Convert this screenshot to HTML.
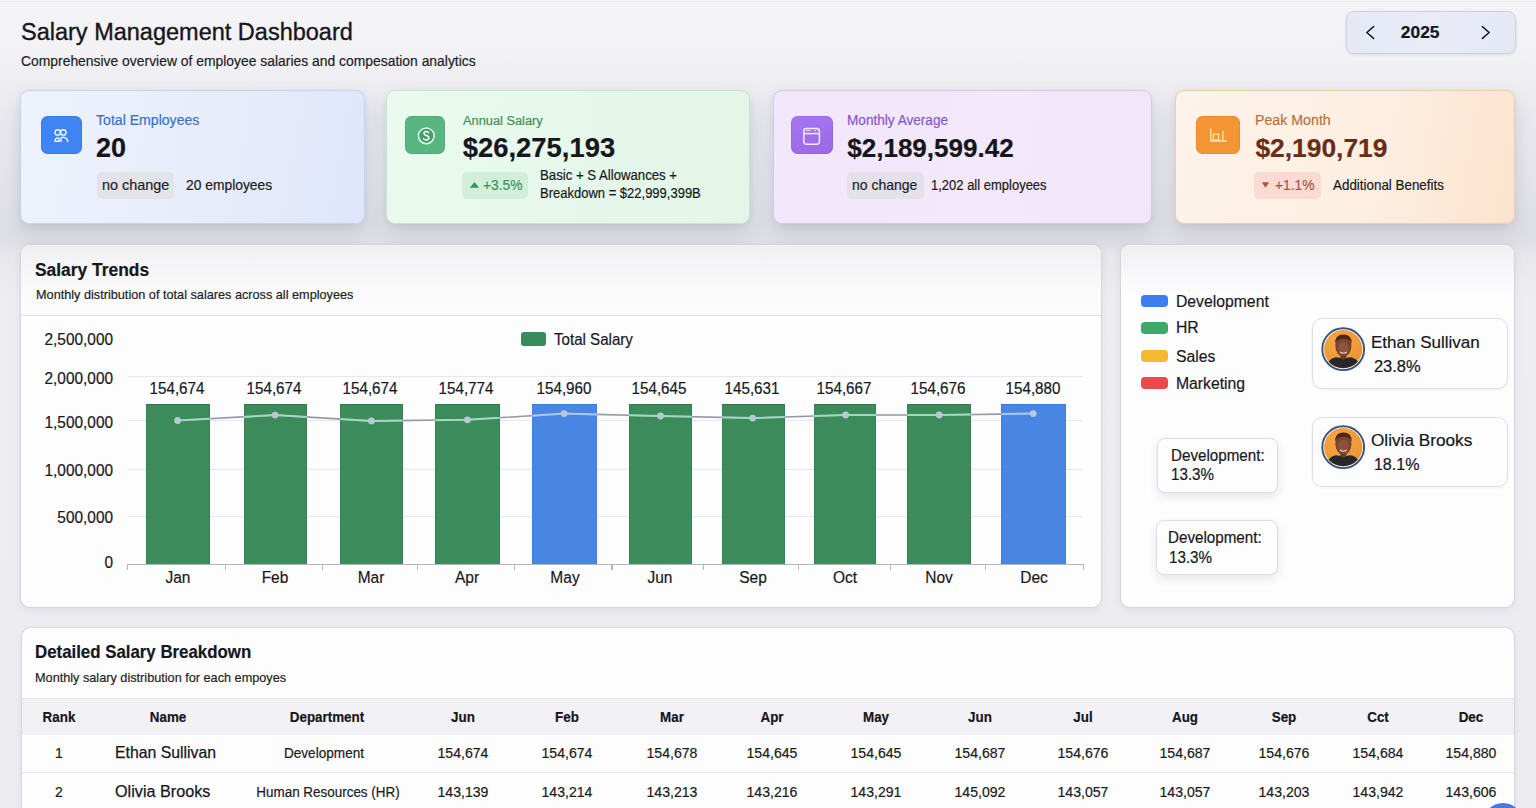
<!DOCTYPE html>
<html><head><meta charset="utf-8"><title>Salary Management Dashboard</title>
<style>
html,body{margin:0;padding:0;}
body{width:1536px;height:808px;overflow:hidden;position:relative;background:linear-gradient(180deg,#f4f4f7 0px,#f2f2f5 60px,#eeeef2 300px,#ededf1 808px);font-family:"Liberation Sans",sans-serif;}
.t{position:absolute;white-space:nowrap;-webkit-text-stroke:0.2px currentColor;}
.r{position:absolute;}
</style></head><body>
<div class="r" style="left:0.00px;top:0.60px;width:1536.00px;height:1.20px;background:#eaeaee;"></div>
<div class="r" style="left:0.00px;top:56.00px;width:1536.00px;height:244.00px;background:linear-gradient(180deg,rgba(235,235,240,0) 0%,rgba(232,232,238,.75) 22%,#e4e4ea 55%,#e0e0e7 70%,#e0e0e7 77%,#e7e7ec 82%,rgba(236,236,241,0) 100%);"></div>
<div class="t" style="top:17px;font-size:23.50px;line-height:30px;font-weight:400;color:#16161c;left:21.00px;transform-origin:0 0;-webkit-text-stroke:0.35px #16161c;">Salary Management Dashboard</div>
<div class="t" style="top:51px;font-size:14.87px;line-height:20px;font-weight:400;color:#1d1d24;left:21.00px;transform-origin:0 0;transform:scaleX(0.9346);">Comprehensive overview of employee salaries and compesation analytics</div>
<div class="r" style="left:1346.00px;top:10.50px;width:169.50px;height:43.00px;background:linear-gradient(90deg,#e5e9f6,#e9ecf7 50%,#e4e8f5);border:1px solid #cdd2e2;border-radius:8px;box-shadow:0 1px 3px rgba(60,60,90,.12);box-sizing:border-box;"></div>
<div class="t" style="top:20px;font-size:17.40px;line-height:24px;font-weight:700;color:#15151c;left:1120.20px;width:600px;text-align:center;transform-origin:50% 0;">2025</div>
<svg class="r" style="left:1362px;top:24px" width="16" height="18" viewBox="0 0 16 18"><path d="M11.6 2.6 L4.8 8.5 L11.6 14.4" fill="none" stroke="#1a1a22" stroke-width="1.5" stroke-linecap="round" stroke-linejoin="round"/></svg>
<svg class="r" style="left:1478px;top:24px" width="16" height="18" viewBox="0 0 16 18"><path d="M4.4 2.6 L11.2 8.5 L4.4 14.4" fill="none" stroke="#1a1a22" stroke-width="1.5" stroke-linecap="round" stroke-linejoin="round"/></svg>
<div class="r" style="left:20.00px;top:90.00px;width:345.00px;height:134.00px;background:linear-gradient(100deg,#eef2fc 0%,#e7ecfb 60%,#dfe6fb 100%);border:1px solid #c5d2f3;border-radius:9px;box-sizing:border-box;box-shadow:0 10px 22px rgba(50,50,95,.13), 0 2px 6px rgba(50,50,95,.06);"></div>
<div class="r" style="left:40.60px;top:115.80px;width:41.00px;height:38.50px;background:#3f84f3;border-radius:6.5px;box-shadow:inset 0 0 0 1px rgba(0,0,0,.06);"></div>
<div class="t" style="top:109px;font-size:15.09px;line-height:21px;font-weight:400;color:#3673cc;left:96.00px;transform-origin:0 0;transform:scaleX(0.9346);">Total Employees</div>
<div class="t" style="top:131px;font-size:27.00px;line-height:34px;font-weight:700;color:#14141a;left:96.00px;transform-origin:0 0;">20</div>
<div class="r" style="left:97.00px;top:172.00px;width:77.00px;height:26.50px;background:#e3e3ea;border-radius:5px;"></div>
<div class="t" style="top:174px;font-size:15.41px;line-height:21px;font-weight:400;color:#1f1f26;left:102.20px;transform-origin:0 0;transform:scaleX(0.9346);">no change</div>
<div class="t" style="top:175px;font-size:14.82px;line-height:20px;font-weight:400;color:#1a1a20;left:186.10px;transform-origin:0 0;transform:scaleX(0.9346);">20 employees</div>
<div class="r" style="left:386.00px;top:90.00px;width:364.00px;height:134.00px;background:linear-gradient(100deg,#eafaef 0%,#e5f7ea 60%,#e3f6e8 100%);border:1px solid #c4e6cd;border-radius:9px;box-sizing:border-box;box-shadow:0 10px 22px rgba(50,50,95,.13), 0 2px 6px rgba(50,50,95,.06);"></div>
<div class="r" style="left:405.00px;top:115.80px;width:40.20px;height:38.50px;background:#58b681;border-radius:6.5px;box-shadow:inset 0 0 0 1px rgba(0,0,0,.06);"></div>
<div class="t" style="top:111px;font-size:13.70px;line-height:19px;font-weight:400;color:#3f8f54;left:462.80px;transform-origin:0 0;transform:scaleX(0.9346);">Annual Salary</div>
<div class="t" style="top:130px;font-size:27.40px;line-height:35px;font-weight:700;color:#16161c;left:462.80px;transform-origin:0 0;">$26,275,193</div>
<div class="r" style="left:462.30px;top:172.00px;width:65.70px;height:26.50px;background:#d3efdb;border-radius:5px;"></div>
<svg class="r" style="left:468.5px;top:181px" width="11" height="8"><path d="M5.5 1 L10.2 6.8 L0.8 6.8Z" fill="#3a9655"/></svg>
<div class="t" style="top:175px;font-size:14.77px;line-height:20px;font-weight:400;color:#3a9655;left:483.30px;transform-origin:0 0;transform:scaleX(0.9346);">+3.5%</div>
<div class="t" style="top:165px;font-size:14.12px;line-height:20px;font-weight:400;color:#1a1a20;left:539.70px;transform-origin:0 0;transform:scaleX(0.9346);">Basic + S Allowances +</div>
<div class="t" style="top:183px;font-size:13.91px;line-height:20px;font-weight:400;color:#1a1a20;left:539.70px;transform-origin:0 0;transform:scaleX(0.9346);">Breakdown = $22,999,399B</div>
<div class="r" style="left:773.00px;top:90.00px;width:379.00px;height:134.00px;background:linear-gradient(100deg,#f2e7fb 0%,#f3e9fb 60%,#f1e6fa 100%);border:1px solid #d9c6ef;border-radius:9px;box-sizing:border-box;box-shadow:0 10px 22px rgba(50,50,95,.13), 0 2px 6px rgba(50,50,95,.06);"></div>
<div class="r" style="left:791.10px;top:115.80px;width:41.90px;height:38.50px;background:linear-gradient(160deg,#a676f2,#9b68e4);border-radius:6.5px;box-shadow:inset 0 0 0 1px rgba(0,0,0,.06);"></div>
<div class="t" style="top:110px;font-size:14.55px;line-height:20px;font-weight:400;color:#8657c9;left:847.20px;transform-origin:0 0;transform:scaleX(0.9346);">Monthly Average</div>
<div class="t" style="top:131px;font-size:26.05px;line-height:34px;font-weight:700;color:#16141c;left:847.20px;transform-origin:0 0;">$2,189,599.42</div>
<div class="r" style="left:847.00px;top:172.00px;width:76.50px;height:26.50px;background:#e4e1ea;border-radius:5px;"></div>
<div class="t" style="top:174px;font-size:14.98px;line-height:21px;font-weight:400;color:#1f1f26;left:852.20px;transform-origin:0 0;transform:scaleX(0.9346);">no change</div>
<div class="t" style="top:175px;font-size:13.91px;line-height:20px;font-weight:400;color:#1a1a20;left:930.50px;transform-origin:0 0;transform:scaleX(0.9346);">1,202 all employees</div>
<div class="r" style="left:1175.00px;top:90.00px;width:340.00px;height:134.00px;background:linear-gradient(100deg,#fdf3ea 0%,#fdeee0 60%,#fde3cd 100%);border:1px solid #f3cdab;border-radius:9px;box-sizing:border-box;box-shadow:0 10px 22px rgba(50,50,95,.13), 0 2px 6px rgba(50,50,95,.06);"></div>
<div class="r" style="left:1196.00px;top:115.80px;width:44.00px;height:38.50px;background:#f39532;border-radius:6.5px;box-shadow:inset 0 0 0 1px rgba(0,0,0,.06);"></div>
<div class="t" style="top:109px;font-size:15.19px;line-height:21px;font-weight:400;color:#b9703c;left:1255.40px;transform-origin:0 0;transform:scaleX(0.9346);">Peak Month</div>
<div class="t" style="top:131px;font-size:26.40px;line-height:34px;font-weight:700;color:#6a2d14;left:1255.40px;transform-origin:0 0;">$2,190,719</div>
<div class="r" style="left:1254.00px;top:172.00px;width:67.00px;height:26.50px;background:#f9dbd3;border-radius:5px;"></div>
<svg class="r" style="left:1261.2px;top:181px" width="9" height="8"><path d="M0.8 1.2 L8.2 1.2 L4.5 6.8Z" fill="#a95848"/></svg>
<div class="t" style="top:175px;font-size:14.77px;line-height:20px;font-weight:400;color:#a95848;left:1275.00px;transform-origin:0 0;transform:scaleX(0.9346);">+1.1%</div>
<div class="t" style="top:175px;font-size:14.34px;line-height:20px;font-weight:400;color:#1a1a20;left:1332.50px;transform-origin:0 0;transform:scaleX(0.9346);">Additional Benefits</div>
<svg class="r" style="left:40px;top:115.5px" width="42" height="40" viewBox="0 0 42 40">
<g fill="none" stroke="#f2f7ff" stroke-width="1.35" stroke-linecap="round">
<circle cx="17.7" cy="16.4" r="2.7"/><circle cx="23.3" cy="16.4" r="2.7"/>
<path d="M15 25.2 Q15.2 21.9 18 21.6 Q19.2 21.7 19.2 23.4 V25.2 Z"/>
<path d="M21 25.4 V22.4 Q21.6 21.2 24 21.3 Q27.4 21.9 27.8 25.6"/>
</g></svg>
<svg class="r" style="left:404.5px;top:115.5px" width="42" height="40" viewBox="0 0 42 40">
<circle cx="21.3" cy="19.8" r="7.9" fill="#4a9d6b" stroke="#dcf8e8" stroke-width="1.5"/>
<path d="M23.6 16.6 Q22.9 15.6 21.2 15.6 Q19 15.6 19 17.4 Q19 19 21.3 19.5 Q23.8 20.1 23.8 22 Q23.8 24 21.2 24 Q19.4 24 18.6 22.9" fill="none" stroke="#f2fff7" stroke-width="1.5" stroke-linecap="round"/>
</svg>
<svg class="r" style="left:791px;top:115.5px" width="42" height="40" viewBox="0 0 42 40">
<g fill="none" stroke="#f6e6ff" stroke-width="1.5"><rect x="12.8" y="12.4" width="15.6" height="15.8" rx="2.6"/><path d="M12.8 17.6 H28.4"/></g>
<path d="M14.8 14.6 H19.5 M23.5 14.6 H25.5" stroke="#f6e6ff" stroke-width="0.9"/>
</svg>
<svg class="r" style="left:1196px;top:115.5px" width="44" height="40" viewBox="0 0 44 40">
<g fill="none" stroke="#fde7b6" stroke-width="1.3"><path d="M14.8 12.6 V25 H30.7"/><rect x="17.4" y="18.2" width="5.2" height="5.6"/><path d="M26.8 14.8 V24.4"/></g>
</svg>
<div class="r" style="left:20.40px;top:244.00px;width:1081.60px;height:363.50px;background:#fdfdfe;border:1px solid #d4d4db;border-radius:10px;box-sizing:border-box;box-shadow:0 3px 10px rgba(70,70,110,.09);"></div>
<div class="r" style="left:21.40px;top:245.00px;width:1079.60px;height:70.00px;background:linear-gradient(180deg,#f0f0f3,#f9f9fa 55%,#fdfdfe);border-radius:9px 9px 0 0;"></div>
<div class="r" style="left:21.40px;top:314.50px;width:1079.60px;height:1.50px;background:#e3e4ea;"></div>
<div class="t" style="top:257px;font-size:18.62px;line-height:25px;font-weight:700;color:#16161c;left:35.40px;transform-origin:0 0;transform:scaleX(0.9346);">Salary Trends</div>
<div class="t" style="top:285px;font-size:13.59px;line-height:19px;font-weight:400;color:#1e1e25;left:35.60px;transform-origin:0 0;transform:scaleX(0.9346);">Monthly distribution of total salares across all employees</div>
<div class="t" style="top:328px;font-size:16.48px;line-height:22px;font-weight:400;color:#18181e;left:-487.20px;width:600px;text-align:right;transform-origin:100% 0;transform:scaleX(0.9346);">2,500,000</div>
<div class="t" style="top:367px;font-size:16.48px;line-height:22px;font-weight:400;color:#18181e;left:-487.20px;width:600px;text-align:right;transform-origin:100% 0;transform:scaleX(0.9346);">2,000,000</div>
<div class="t" style="top:411px;font-size:16.48px;line-height:22px;font-weight:400;color:#18181e;left:-487.20px;width:600px;text-align:right;transform-origin:100% 0;transform:scaleX(0.9346);">1,500,000</div>
<div class="t" style="top:459px;font-size:16.48px;line-height:22px;font-weight:400;color:#18181e;left:-487.20px;width:600px;text-align:right;transform-origin:100% 0;transform:scaleX(0.9346);">1,000,000</div>
<div class="t" style="top:506px;font-size:16.48px;line-height:22px;font-weight:400;color:#18181e;left:-487.20px;width:600px;text-align:right;transform-origin:100% 0;transform:scaleX(0.9346);">500,000</div>
<div class="t" style="top:551px;font-size:16.48px;line-height:22px;font-weight:400;color:#18181e;left:-487.20px;width:600px;text-align:right;transform-origin:100% 0;transform:scaleX(0.9346);">0</div>
<div class="r" style="left:127.60px;top:376.10px;width:955.80px;height:1.20px;background:#e7e8ec;"></div>
<div class="r" style="left:127.60px;top:419.60px;width:955.80px;height:1.20px;background:#e7e8ec;"></div>
<div class="r" style="left:127.60px;top:468.70px;width:955.80px;height:1.20px;background:#e7e8ec;"></div>
<div class="r" style="left:127.60px;top:516.00px;width:955.80px;height:1.20px;background:#e7e8ec;"></div>
<div class="r" style="left:521.00px;top:332.00px;width:25.00px;height:14.00px;background:#3a8b5b;border-radius:3px;"></div>
<div class="t" style="top:328px;font-size:16.16px;line-height:22px;font-weight:400;color:#18181e;left:554.00px;transform-origin:0 0;transform:scaleX(0.9346);">Total Salary</div>
<div class="r" style="left:145.60px;top:403.60px;width:64.60px;height:160.40px;background:#3b8b5b;box-shadow:inset 0 1px 0 #327a4e,inset 1px 0 0 #327a4e88,inset -1px 0 0 #327a4e88;"></div>
<div class="t" style="top:377px;font-size:16.26px;line-height:22px;font-weight:400;color:#18181e;left:-123.10px;width:600px;text-align:center;transform-origin:50% 0;transform:scaleX(0.9346);">154,674</div>
<div class="t" style="top:566px;font-size:16.59px;line-height:23px;font-weight:400;color:#18181e;left:-122.10px;width:600px;text-align:center;transform-origin:50% 0;transform:scaleX(0.9346);">Jan</div>
<div class="r" style="left:243.50px;top:403.60px;width:63.50px;height:160.40px;background:#3b8b5b;box-shadow:inset 0 1px 0 #327a4e,inset 1px 0 0 #327a4e88,inset -1px 0 0 #327a4e88;"></div>
<div class="t" style="top:377px;font-size:16.26px;line-height:22px;font-weight:400;color:#18181e;left:-25.75px;width:600px;text-align:center;transform-origin:50% 0;transform:scaleX(0.9346);">154,674</div>
<div class="t" style="top:566px;font-size:16.59px;line-height:23px;font-weight:400;color:#18181e;left:-24.75px;width:600px;text-align:center;transform-origin:50% 0;transform:scaleX(0.9346);">Feb</div>
<div class="r" style="left:340.20px;top:403.60px;width:62.40px;height:160.40px;background:#3b8b5b;box-shadow:inset 0 1px 0 #327a4e,inset 1px 0 0 #327a4e88,inset -1px 0 0 #327a4e88;"></div>
<div class="t" style="top:377px;font-size:16.26px;line-height:22px;font-weight:400;color:#18181e;left:70.40px;width:600px;text-align:center;transform-origin:50% 0;transform:scaleX(0.9346);">154,674</div>
<div class="t" style="top:566px;font-size:16.59px;line-height:23px;font-weight:400;color:#18181e;left:71.40px;width:600px;text-align:center;transform-origin:50% 0;transform:scaleX(0.9346);">Mar</div>
<div class="r" style="left:435.20px;top:403.60px;width:64.50px;height:160.40px;background:#3b8b5b;box-shadow:inset 0 1px 0 #327a4e,inset 1px 0 0 #327a4e88,inset -1px 0 0 #327a4e88;"></div>
<div class="t" style="top:377px;font-size:16.26px;line-height:22px;font-weight:400;color:#18181e;left:166.45px;width:600px;text-align:center;transform-origin:50% 0;transform:scaleX(0.9346);">154,774</div>
<div class="t" style="top:566px;font-size:16.59px;line-height:23px;font-weight:400;color:#18181e;left:167.45px;width:600px;text-align:center;transform-origin:50% 0;transform:scaleX(0.9346);">Apr</div>
<div class="r" style="left:532.20px;top:403.60px;width:65.20px;height:160.40px;background:#4985e2;box-shadow:inset 0 1px 0 #3d78d8,inset 1px 0 0 #3d78d888,inset -1px 0 0 #3d78d888;"></div>
<div class="t" style="top:377px;font-size:16.26px;line-height:22px;font-weight:400;color:#18181e;left:263.80px;width:600px;text-align:center;transform-origin:50% 0;transform:scaleX(0.9346);">154,960</div>
<div class="t" style="top:566px;font-size:16.59px;line-height:23px;font-weight:400;color:#18181e;left:264.80px;width:600px;text-align:center;transform-origin:50% 0;transform:scaleX(0.9346);">May</div>
<div class="r" style="left:628.60px;top:403.60px;width:63.10px;height:160.40px;background:#3b8b5b;box-shadow:inset 0 1px 0 #327a4e,inset 1px 0 0 #327a4e88,inset -1px 0 0 #327a4e88;"></div>
<div class="t" style="top:377px;font-size:16.26px;line-height:22px;font-weight:400;color:#18181e;left:359.15px;width:600px;text-align:center;transform-origin:50% 0;transform:scaleX(0.9346);">154,645</div>
<div class="t" style="top:566px;font-size:16.59px;line-height:23px;font-weight:400;color:#18181e;left:360.15px;width:600px;text-align:center;transform-origin:50% 0;transform:scaleX(0.9346);">Jun</div>
<div class="r" style="left:721.90px;top:403.60px;width:62.70px;height:160.40px;background:#3b8b5b;box-shadow:inset 0 1px 0 #327a4e,inset 1px 0 0 #327a4e88,inset -1px 0 0 #327a4e88;"></div>
<div class="t" style="top:377px;font-size:16.26px;line-height:22px;font-weight:400;color:#18181e;left:452.25px;width:600px;text-align:center;transform-origin:50% 0;transform:scaleX(0.9346);">145,631</div>
<div class="t" style="top:566px;font-size:16.59px;line-height:23px;font-weight:400;color:#18181e;left:453.25px;width:600px;text-align:center;transform-origin:50% 0;transform:scaleX(0.9346);">Sep</div>
<div class="r" style="left:813.70px;top:403.60px;width:62.40px;height:160.40px;background:#3b8b5b;box-shadow:inset 0 1px 0 #327a4e,inset 1px 0 0 #327a4e88,inset -1px 0 0 #327a4e88;"></div>
<div class="t" style="top:377px;font-size:16.26px;line-height:22px;font-weight:400;color:#18181e;left:543.90px;width:600px;text-align:center;transform-origin:50% 0;transform:scaleX(0.9346);">154,667</div>
<div class="t" style="top:566px;font-size:16.59px;line-height:23px;font-weight:400;color:#18181e;left:544.90px;width:600px;text-align:center;transform-origin:50% 0;transform:scaleX(0.9346);">Oct</div>
<div class="r" style="left:907.30px;top:403.60px;width:63.50px;height:160.40px;background:#3b8b5b;box-shadow:inset 0 1px 0 #327a4e,inset 1px 0 0 #327a4e88,inset -1px 0 0 #327a4e88;"></div>
<div class="t" style="top:377px;font-size:16.26px;line-height:22px;font-weight:400;color:#18181e;left:638.05px;width:600px;text-align:center;transform-origin:50% 0;transform:scaleX(0.9346);">154,676</div>
<div class="t" style="top:566px;font-size:16.59px;line-height:23px;font-weight:400;color:#18181e;left:639.05px;width:600px;text-align:center;transform-origin:50% 0;transform:scaleX(0.9346);">Nov</div>
<div class="r" style="left:1001.30px;top:403.60px;width:65.10px;height:160.40px;background:#4985e2;box-shadow:inset 0 1px 0 #3d78d8,inset 1px 0 0 #3d78d888,inset -1px 0 0 #3d78d888;"></div>
<div class="t" style="top:377px;font-size:16.26px;line-height:22px;font-weight:400;color:#18181e;left:732.85px;width:600px;text-align:center;transform-origin:50% 0;transform:scaleX(0.9346);">154,880</div>
<div class="t" style="top:566px;font-size:16.59px;line-height:23px;font-weight:400;color:#18181e;left:733.85px;width:600px;text-align:center;transform-origin:50% 0;transform:scaleX(0.9346);">Dec</div>
<div class="r" style="left:127.60px;top:563.50px;width:955.80px;height:1.50px;background:#b3b7c2;"></div>
<div class="r" style="left:127.00px;top:564.00px;width:1.20px;height:5.50px;background:#b3b7c2;"></div>
<div class="r" style="left:224.60px;top:564.00px;width:1.20px;height:5.50px;background:#b3b7c2;"></div>
<div class="r" style="left:321.60px;top:564.00px;width:1.20px;height:5.50px;background:#b3b7c2;"></div>
<div class="r" style="left:416.60px;top:564.00px;width:1.20px;height:5.50px;background:#b3b7c2;"></div>
<div class="r" style="left:513.60px;top:564.00px;width:1.20px;height:5.50px;background:#b3b7c2;"></div>
<div class="r" style="left:611.40px;top:564.00px;width:1.20px;height:5.50px;background:#b3b7c2;"></div>
<div class="r" style="left:702.60px;top:564.00px;width:1.20px;height:5.50px;background:#b3b7c2;"></div>
<div class="r" style="left:797.50px;top:564.00px;width:1.20px;height:5.50px;background:#b3b7c2;"></div>
<div class="r" style="left:889.70px;top:564.00px;width:1.20px;height:5.50px;background:#b3b7c2;"></div>
<div class="r" style="left:984.70px;top:564.00px;width:1.20px;height:5.50px;background:#b3b7c2;"></div>
<div class="r" style="left:1082.80px;top:564.00px;width:1.20px;height:5.50px;background:#b3b7c2;"></div>
<svg class="r" style="left:0;top:0" width="1536" height="808"><defs><clipPath id="cg"><rect x="145.6" y="403" width="64.6" height="162"/><rect x="243.5" y="403" width="63.5" height="162"/><rect x="340.2" y="403" width="62.4" height="162"/><rect x="435.2" y="403" width="64.5" height="162"/><rect x="628.6" y="403" width="63.1" height="162"/><rect x="721.9" y="403" width="62.7" height="162"/><rect x="813.7" y="403" width="62.4" height="162"/><rect x="907.3" y="403" width="63.5" height="162"/></clipPath><clipPath id="cb"><rect x="532.2" y="403" width="65.2" height="162"/><rect x="1001.3" y="403" width="65.1" height="162"/></clipPath></defs>
<path d="M177.6 420.5 L275.1 415.1 L371.4 420.9 L467.4 419.8 L564.1 413.6 L660.5 416.0 L752.6 418.1 L845.6 415.0 L939.2 415.0 L1033.2 413.6" fill="none" stroke="#9299a8" stroke-width="1.6"/>
<path d="M177.6 420.5 L275.1 415.1 L371.4 420.9 L467.4 419.8 L564.1 413.6 L660.5 416.0 L752.6 418.1 L845.6 415.0 L939.2 415.0 L1033.2 413.6" fill="none" stroke="#a3d8c2" stroke-width="2" clip-path="url(#cg)"/>
<path d="M177.6 420.5 L275.1 415.1 L371.4 420.9 L467.4 419.8 L564.1 413.6 L660.5 416.0 L752.6 418.1 L845.6 415.0 L939.2 415.0 L1033.2 413.6" fill="none" stroke="#a9c8f2" stroke-width="2" clip-path="url(#cb)"/>
<circle cx="177.6" cy="420.5" r="3.4" fill="#b7c9d3"/><circle cx="275.1" cy="415.1" r="3.4" fill="#b7c9d3"/><circle cx="371.4" cy="420.9" r="3.4" fill="#b7c9d3"/><circle cx="467.4" cy="419.8" r="3.4" fill="#b7c9d3"/><circle cx="564.1" cy="413.6" r="3.4" fill="#b7c9d3"/><circle cx="660.5" cy="416.0" r="3.4" fill="#b7c9d3"/><circle cx="752.6" cy="418.1" r="3.4" fill="#b7c9d3"/><circle cx="845.6" cy="415.0" r="3.4" fill="#b7c9d3"/><circle cx="939.2" cy="415.0" r="3.4" fill="#b7c9d3"/><circle cx="1033.2" cy="413.6" r="3.4" fill="#b7c9d3"/></svg>
<div class="r" style="left:1119.50px;top:244.40px;width:395.00px;height:363.60px;background:#fdfdfe;border:1px solid #d4d4db;border-radius:10px;box-sizing:border-box;box-shadow:0 3px 10px rgba(70,70,110,.09);"></div>
<div class="r" style="left:1120.50px;top:245.40px;width:393.00px;height:54.60px;background:linear-gradient(180deg,#efeff2,#f8f8fa 50%,rgba(253,253,254,0));border-radius:9px 9px 0 0;"></div>
<div class="r" style="left:1141.00px;top:295.00px;width:27.00px;height:12.20px;background:#3d7ff2;border-radius:4px;"></div>
<div class="t" style="top:290px;font-size:16.85px;line-height:23px;font-weight:400;color:#18181e;left:1175.50px;transform-origin:0 0;transform:scaleX(0.9346);">Development</div>
<div class="r" style="left:1141.00px;top:321.70px;width:27.00px;height:12.20px;background:#3fa96b;border-radius:4px;"></div>
<div class="t" style="top:316px;font-size:16.85px;line-height:23px;font-weight:400;color:#18181e;left:1175.50px;transform-origin:0 0;transform:scaleX(0.9346);">HR</div>
<div class="r" style="left:1141.00px;top:349.60px;width:27.00px;height:12.20px;background:#f6b733;border-radius:4px;"></div>
<div class="t" style="top:345px;font-size:16.85px;line-height:23px;font-weight:400;color:#18181e;left:1175.50px;transform-origin:0 0;transform:scaleX(0.9346);">Sales</div>
<div class="r" style="left:1141.00px;top:377.00px;width:27.00px;height:12.20px;background:#e84a4c;border-radius:4px;"></div>
<div class="t" style="top:372px;font-size:16.85px;line-height:23px;font-weight:400;color:#18181e;left:1175.50px;transform-origin:0 0;transform:scaleX(0.9346);">Marketing</div>
<div class="r" style="left:1311.60px;top:318.30px;width:196.40px;height:70.90px;background:#fdfdfe;border:1px solid #dedfe6;border-radius:10px;box-sizing:border-box;box-shadow:0 1px 3px rgba(70,70,110,.06);"></div>
<svg class="r" style="left:1321px;top:327.4px" width="44" height="44" viewBox="0 0 44 44">
<defs><clipPath id="c327"><circle cx="22.2" cy="22.2" r="19.1"/></clipPath><radialGradient id="g327" cx=".4" cy=".35" r=".7"><stop offset="0" stop-color="#f5a843"/><stop offset="1" stop-color="#ea922e"/></radialGradient></defs>
<circle cx="22.2" cy="22.2" r="20.9" fill="#f7f8fa" stroke="#3f5378" stroke-width="1.9"/>
<g clip-path="url(#c327)"><rect x="0" y="0" width="44" height="44" fill="url(#g327)"/>
<rect x="19.2" y="25" width="6.2" height="8" fill="#6b3a28"/>
<path d="M4 44 Q5.5 33 13.5 30.6 Q18 29.4 22.3 33 Q26.6 29.4 31 30.6 Q39 33 40.5 44Z" fill="#26262b"/>
<ellipse cx="22.4" cy="18.8" rx="8.1" ry="10.8" fill="#7a4431"/>
<path d="M14.2 16.4 Q13.8 7.4 22.4 7.4 Q31 7.4 30.6 16.4 Q29.4 11.6 22.4 11.7 Q15.4 11.6 14.2 16.4Z" fill="#4d2619"/>
<ellipse cx="22.4" cy="21" rx="5.2" ry="6.4" fill="#a2634a" opacity=".45"/>
<path d="M18.9 25 Q22.4 27.4 25.9 25" stroke="#e8d2c2" stroke-width="1.1" fill="none"/>
</g></svg>
<div class="t" style="top:331px;font-size:17.00px;line-height:23px;font-weight:400;color:#16161c;left:1371.00px;transform-origin:0 0;">Ethan Sullivan</div>
<div class="t" style="top:355px;font-size:16.50px;line-height:22px;font-weight:400;color:#16161c;left:1373.90px;transform-origin:0 0;">23.8%</div>
<div class="r" style="left:1311.60px;top:416.70px;width:196.40px;height:70.40px;background:#fdfdfe;border:1px solid #dedfe6;border-radius:10px;box-sizing:border-box;box-shadow:0 1px 3px rgba(70,70,110,.06);"></div>
<svg class="r" style="left:1321px;top:425.4px" width="44" height="44" viewBox="0 0 44 44">
<defs><clipPath id="c425"><circle cx="22.2" cy="22.2" r="19.1"/></clipPath><radialGradient id="g425" cx=".4" cy=".35" r=".7"><stop offset="0" stop-color="#f5a843"/><stop offset="1" stop-color="#ea922e"/></radialGradient></defs>
<circle cx="22.2" cy="22.2" r="20.9" fill="#f7f8fa" stroke="#3f5378" stroke-width="1.9"/>
<g clip-path="url(#c425)"><rect x="0" y="0" width="44" height="44" fill="url(#g425)"/>
<rect x="19.2" y="25" width="6.2" height="8" fill="#6b3a28"/>
<path d="M4 44 Q5.5 33 13.5 30.6 Q18 29.4 22.3 33 Q26.6 29.4 31 30.6 Q39 33 40.5 44Z" fill="#26262b"/>
<ellipse cx="22.4" cy="18.8" rx="8.1" ry="10.8" fill="#7a4431"/>
<path d="M14.2 16.4 Q13.8 7.4 22.4 7.4 Q31 7.4 30.6 16.4 Q29.4 11.6 22.4 11.7 Q15.4 11.6 14.2 16.4Z" fill="#4d2619"/>
<ellipse cx="22.4" cy="21" rx="5.2" ry="6.4" fill="#a2634a" opacity=".45"/>
<path d="M18.9 25 Q22.4 27.4 25.9 25" stroke="#e8d2c2" stroke-width="1.1" fill="none"/>
</g></svg>
<div class="t" style="top:428px;font-size:17.20px;line-height:24px;font-weight:400;color:#16161c;left:1371.00px;transform-origin:0 0;">Olivia Brooks</div>
<div class="t" style="top:453px;font-size:16.10px;line-height:22px;font-weight:400;color:#16161c;left:1373.90px;transform-origin:0 0;">18.1%</div>
<div class="r" style="left:1157.30px;top:438.40px;width:121.10px;height:54.50px;background:#fdfdfe;border:1px solid #dcdde4;border-radius:8px;box-sizing:border-box;box-shadow:0 4px 10px rgba(60,60,90,.12);"></div>
<div class="t" style="top:444px;font-size:16.26px;line-height:22px;font-weight:400;color:#18181e;left:1170.80px;transform-origin:0 0;transform:scaleX(0.9346);">Development:</div>
<div class="t" style="top:463px;font-size:16.26px;line-height:22px;font-weight:400;color:#18181e;left:1171.30px;transform-origin:0 0;transform:scaleX(0.9346);">13.3%</div>
<div class="r" style="left:1156.30px;top:520.40px;width:122.10px;height:55.00px;background:#fdfdfe;border:1px solid #dcdde4;border-radius:8px;box-sizing:border-box;box-shadow:0 4px 10px rgba(60,60,90,.12);"></div>
<div class="t" style="top:526px;font-size:16.26px;line-height:22px;font-weight:400;color:#18181e;left:1168.40px;transform-origin:0 0;transform:scaleX(0.9346);">Development:</div>
<div class="t" style="top:546px;font-size:16.26px;line-height:22px;font-weight:400;color:#18181e;left:1168.90px;transform-origin:0 0;transform:scaleX(0.9346);">13.3%</div>
<div class="r" style="left:20.60px;top:627.00px;width:1494.40px;height:203.00px;background:#fdfdfe;border:1px solid #d6d6dd;border-radius:10px;box-sizing:border-box;box-shadow:0 3px 10px rgba(70,70,110,.09);"></div>
<div class="t" style="top:640px;font-size:18.03px;line-height:24px;font-weight:700;color:#16161c;left:35.00px;transform-origin:0 0;transform:scaleX(0.9346);">Detailed Salary Breakdown</div>
<div class="t" style="top:668px;font-size:13.59px;line-height:19px;font-weight:400;color:#1e1e25;left:35.20px;transform-origin:0 0;transform:scaleX(0.9346);">Monthly salary distribution for each empoyes</div>
<div class="r" style="left:22.00px;top:697.50px;width:1492.00px;height:1.50px;background:#e2e3e9;"></div>
<div class="r" style="left:22.00px;top:699.00px;width:1492.00px;height:36.00px;background:#f2f2f6;"></div>
<div class="r" style="left:22.00px;top:772.30px;width:1492.00px;height:1.20px;background:#e6e6eb;"></div>
<div class="t" style="top:707px;font-size:14.34px;line-height:20px;font-weight:700;color:#16161c;left:-241.40px;width:600px;text-align:center;transform-origin:50% 0;transform:scaleX(0.9346);">Rank</div>
<div class="t" style="top:707px;font-size:14.34px;line-height:20px;font-weight:700;color:#16161c;left:-131.60px;width:600px;text-align:center;transform-origin:50% 0;transform:scaleX(0.9346);">Name</div>
<div class="t" style="top:707px;font-size:14.34px;line-height:20px;font-weight:700;color:#16161c;left:26.80px;width:600px;text-align:center;transform-origin:50% 0;transform:scaleX(0.9346);">Department</div>
<div class="t" style="top:707px;font-size:14.34px;line-height:20px;font-weight:700;color:#16161c;left:163.30px;width:600px;text-align:center;transform-origin:50% 0;transform:scaleX(0.9346);">Jun</div>
<div class="t" style="top:707px;font-size:14.34px;line-height:20px;font-weight:700;color:#16161c;left:267.40px;width:600px;text-align:center;transform-origin:50% 0;transform:scaleX(0.9346);">Feb</div>
<div class="t" style="top:707px;font-size:14.34px;line-height:20px;font-weight:700;color:#16161c;left:372.40px;width:600px;text-align:center;transform-origin:50% 0;transform:scaleX(0.9346);">Mar</div>
<div class="t" style="top:707px;font-size:14.34px;line-height:20px;font-weight:700;color:#16161c;left:472.00px;width:600px;text-align:center;transform-origin:50% 0;transform:scaleX(0.9346);">Apr</div>
<div class="t" style="top:707px;font-size:14.34px;line-height:20px;font-weight:700;color:#16161c;left:575.50px;width:600px;text-align:center;transform-origin:50% 0;transform:scaleX(0.9346);">May</div>
<div class="t" style="top:707px;font-size:14.34px;line-height:20px;font-weight:700;color:#16161c;left:680.10px;width:600px;text-align:center;transform-origin:50% 0;transform:scaleX(0.9346);">Jun</div>
<div class="t" style="top:707px;font-size:14.34px;line-height:20px;font-weight:700;color:#16161c;left:782.70px;width:600px;text-align:center;transform-origin:50% 0;transform:scaleX(0.9346);">Jul</div>
<div class="t" style="top:707px;font-size:14.34px;line-height:20px;font-weight:700;color:#16161c;left:885.30px;width:600px;text-align:center;transform-origin:50% 0;transform:scaleX(0.9346);">Aug</div>
<div class="t" style="top:707px;font-size:14.34px;line-height:20px;font-weight:700;color:#16161c;left:984.40px;width:600px;text-align:center;transform-origin:50% 0;transform:scaleX(0.9346);">Sep</div>
<div class="t" style="top:707px;font-size:14.34px;line-height:20px;font-weight:700;color:#16161c;left:1078.20px;width:600px;text-align:center;transform-origin:50% 0;transform:scaleX(0.9346);">Cct</div>
<div class="t" style="top:707px;font-size:14.34px;line-height:20px;font-weight:700;color:#16161c;left:1171.00px;width:600px;text-align:center;transform-origin:50% 0;transform:scaleX(0.9346);">Dec</div>
<div class="t" style="top:742px;font-size:15.09px;line-height:21px;font-weight:400;color:#1a1a20;left:-241.40px;width:600px;text-align:center;transform-origin:50% 0;transform:scaleX(0.9346);">1</div>
<div class="t" style="top:741px;font-size:16.91px;line-height:23px;font-weight:400;color:#16161c;left:115.00px;transform-origin:0 0;transform:scaleX(0.9346);-webkit-text-stroke:0.25px #16161c;">Ethan Sullivan</div>
<div class="t" style="top:743px;font-size:14.55px;line-height:20px;font-weight:400;color:#1a1a20;left:24.40px;width:600px;text-align:center;transform-origin:50% 0;transform:scaleX(0.9346);">Development</div>
<div class="t" style="top:742px;font-size:15.09px;line-height:21px;font-weight:400;color:#1a1a20;left:163.30px;width:600px;text-align:center;transform-origin:50% 0;transform:scaleX(0.9346);">154,674</div>
<div class="t" style="top:742px;font-size:15.09px;line-height:21px;font-weight:400;color:#1a1a20;left:267.40px;width:600px;text-align:center;transform-origin:50% 0;transform:scaleX(0.9346);">154,674</div>
<div class="t" style="top:742px;font-size:15.09px;line-height:21px;font-weight:400;color:#1a1a20;left:372.40px;width:600px;text-align:center;transform-origin:50% 0;transform:scaleX(0.9346);">154,678</div>
<div class="t" style="top:742px;font-size:15.09px;line-height:21px;font-weight:400;color:#1a1a20;left:472.00px;width:600px;text-align:center;transform-origin:50% 0;transform:scaleX(0.9346);">154,645</div>
<div class="t" style="top:742px;font-size:15.09px;line-height:21px;font-weight:400;color:#1a1a20;left:575.50px;width:600px;text-align:center;transform-origin:50% 0;transform:scaleX(0.9346);">154,645</div>
<div class="t" style="top:742px;font-size:15.09px;line-height:21px;font-weight:400;color:#1a1a20;left:680.10px;width:600px;text-align:center;transform-origin:50% 0;transform:scaleX(0.9346);">154,687</div>
<div class="t" style="top:742px;font-size:15.09px;line-height:21px;font-weight:400;color:#1a1a20;left:782.70px;width:600px;text-align:center;transform-origin:50% 0;transform:scaleX(0.9346);">154,676</div>
<div class="t" style="top:742px;font-size:15.09px;line-height:21px;font-weight:400;color:#1a1a20;left:885.30px;width:600px;text-align:center;transform-origin:50% 0;transform:scaleX(0.9346);">154,687</div>
<div class="t" style="top:742px;font-size:15.09px;line-height:21px;font-weight:400;color:#1a1a20;left:984.40px;width:600px;text-align:center;transform-origin:50% 0;transform:scaleX(0.9346);">154,676</div>
<div class="t" style="top:742px;font-size:15.09px;line-height:21px;font-weight:400;color:#1a1a20;left:1078.20px;width:600px;text-align:center;transform-origin:50% 0;transform:scaleX(0.9346);">154,684</div>
<div class="t" style="top:742px;font-size:15.09px;line-height:21px;font-weight:400;color:#1a1a20;left:1171.00px;width:600px;text-align:center;transform-origin:50% 0;transform:scaleX(0.9346);">154,880</div>
<div class="t" style="top:781px;font-size:15.09px;line-height:21px;font-weight:400;color:#1a1a20;left:-241.40px;width:600px;text-align:center;transform-origin:50% 0;transform:scaleX(0.9346);">2</div>
<div class="t" style="top:779px;font-size:17.33px;line-height:24px;font-weight:400;color:#16161c;left:115.00px;transform-origin:0 0;transform:scaleX(0.9346);-webkit-text-stroke:0.25px #16161c;">Olivia Brooks</div>
<div class="t" style="top:782px;font-size:14.39px;line-height:20px;font-weight:400;color:#1a1a20;left:27.90px;width:600px;text-align:center;transform-origin:50% 0;transform:scaleX(0.9346);">Human Resources (HR)</div>
<div class="t" style="top:781px;font-size:15.09px;line-height:21px;font-weight:400;color:#1a1a20;left:163.30px;width:600px;text-align:center;transform-origin:50% 0;transform:scaleX(0.9346);">143,139</div>
<div class="t" style="top:781px;font-size:15.09px;line-height:21px;font-weight:400;color:#1a1a20;left:267.40px;width:600px;text-align:center;transform-origin:50% 0;transform:scaleX(0.9346);">143,214</div>
<div class="t" style="top:781px;font-size:15.09px;line-height:21px;font-weight:400;color:#1a1a20;left:372.40px;width:600px;text-align:center;transform-origin:50% 0;transform:scaleX(0.9346);">143,213</div>
<div class="t" style="top:781px;font-size:15.09px;line-height:21px;font-weight:400;color:#1a1a20;left:472.00px;width:600px;text-align:center;transform-origin:50% 0;transform:scaleX(0.9346);">143,216</div>
<div class="t" style="top:781px;font-size:15.09px;line-height:21px;font-weight:400;color:#1a1a20;left:575.50px;width:600px;text-align:center;transform-origin:50% 0;transform:scaleX(0.9346);">143,291</div>
<div class="t" style="top:781px;font-size:15.09px;line-height:21px;font-weight:400;color:#1a1a20;left:680.10px;width:600px;text-align:center;transform-origin:50% 0;transform:scaleX(0.9346);">145,092</div>
<div class="t" style="top:781px;font-size:15.09px;line-height:21px;font-weight:400;color:#1a1a20;left:782.70px;width:600px;text-align:center;transform-origin:50% 0;transform:scaleX(0.9346);">143,057</div>
<div class="t" style="top:781px;font-size:15.09px;line-height:21px;font-weight:400;color:#1a1a20;left:885.30px;width:600px;text-align:center;transform-origin:50% 0;transform:scaleX(0.9346);">143,057</div>
<div class="t" style="top:781px;font-size:15.09px;line-height:21px;font-weight:400;color:#1a1a20;left:984.40px;width:600px;text-align:center;transform-origin:50% 0;transform:scaleX(0.9346);">143,203</div>
<div class="t" style="top:781px;font-size:15.09px;line-height:21px;font-weight:400;color:#1a1a20;left:1078.20px;width:600px;text-align:center;transform-origin:50% 0;transform:scaleX(0.9346);">143,942</div>
<div class="t" style="top:781px;font-size:15.09px;line-height:21px;font-weight:400;color:#1a1a20;left:1171.00px;width:600px;text-align:center;transform-origin:50% 0;transform:scaleX(0.9346);">143,606</div>
<div class="r" style="left:1482.70px;top:803.30px;width:40.60px;height:40.60px;background:#4877e0;border-radius:50%;"></div>
</body></html>
